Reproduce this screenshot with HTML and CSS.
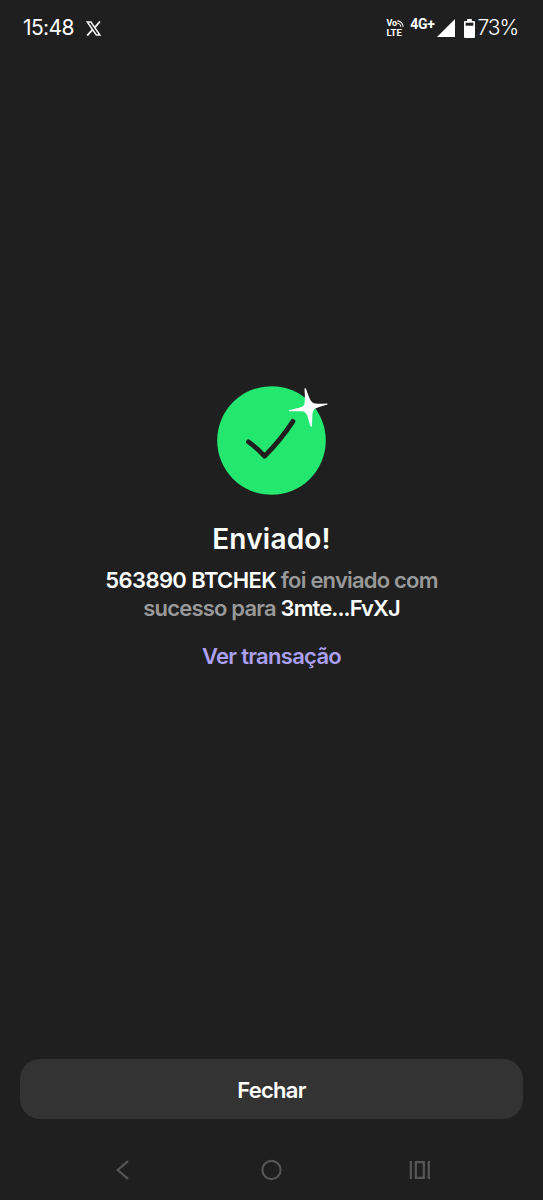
FILE: index.html
```html
<!DOCTYPE html>
<html lang="pt-BR">
<head>
    <meta charset="UTF-8">
    <meta name="viewport" content="width=device-width, initial-scale=1.0">
    <title>Enviado</title>
    <link rel="stylesheet" href="styles.css">
</head>
<body>
    <header class="status-bar">
        <div class="status-left">
            <span class="clock">15:48</span>
            <svg class="x-icon" width="16" height="15" viewBox="0 0 16 15">
                <path d="M1.3 1h3.6l9 13h-3.6z" fill="none" stroke="#f2f2f2" stroke-width="1.5"/>
                <path d="M14 .5L8.9 6.3M6.5 8.7L1.2 14.6" stroke="#f2f2f2" stroke-width="1.8"/>
            </svg>
        </div>
        <div class="status-right">
            <div class="volte">
                <div class="vo">Vo<svg width="7" height="7" viewBox="0 0 7 7">
                    <path d="M.3.9a5.8 5.8 0 0 1 5.8 5.8M.3 3.3a3.4 3.4 0 0 1 3.4 3.4" fill="none" stroke="#fff" stroke-width="1.1"/>
                </svg></div>
                <div>LTE</div>
            </div>
            <span class="network">4G+</span>
            <svg class="signal" width="18" height="18" viewBox="0 0 18 18">
                <path d="M18 0v18H0z" fill="#fff"/>
            </svg>
            <svg class="battery" width="11" height="19" viewBox="0 0 11 19">
                <path d="M3.2 0h4.6v2H10a1 1 0 0 1 1 1v15a1 1 0 0 1-1 1H1a1 1 0 0 1-1-1V3a1 1 0 0 1 1-1h2.2z" fill="#fff"/>
                <path d="M1.6 3.7h7.8v3H1.6z" fill="#1f1f1f"/>
            </svg>
            <span class="percent">73%</span>
        </div>
    </header>

    <main class="content">
        <svg class="success-icon" width="119" height="120" viewBox="0.5 0 119 120">
            <circle cx="60" cy="59.5" r="54.3" fill="#24e770"/>
            <path d="M37 60.9Q45.5 67 53 75.2Q69 59.5 81.4 40.4" fill="none" stroke="#1f1f1f" stroke-width="4.8" stroke-linecap="round" stroke-linejoin="round"/>
            <path d="M93 7.4Q93.6 6.8 94.3 7.6C96 11.5 97.8 18.5 100.7 21.2Q102.7 23.2 115.6 22.6Q116.6 23.2 115.6 23.8C110 25.3 104.4 26.6 102.2 29C100.4 31 101 38 100.5 45.3Q99.8 46.2 99.1 45.3C97.3 41 96.4 34.2 94 31.7C91.8 29.4 85 30.6 77.7 30.3Q76.9 29.7 77.8 29.1C82 27.5 89.8 27 92.2 24.4Q94.1 22.4 93 7.4z" fill="#fff"/>
        </svg>
        <h1>Enviado!</h1>
        <p class="message">
            <strong>563890 BTCHEK</strong> foi enviado com<br>
            sucesso para <strong class="address">3mte...FvXJ</strong>
        </p>
        <a class="link" href="#">Ver transação</a>
    </main>

    <footer class="footer">
        <button class="close-button">Fechar</button>
    </footer>

    <nav class="nav-bar">
        <svg width="22" height="22" viewBox="0 0 22 22">
            <path d="M16 2.2L5.7 11l10.3 8.8" fill="none" stroke="#565656" stroke-width="2.2"/>
        </svg>
        <svg width="22" height="22" viewBox="0 0 22 22">
            <circle cx="10.5" cy="11" r="9.1" fill="none" stroke="#565656" stroke-width="2.1"/>
        </svg>
        <svg width="22" height="22" viewBox="0 0 22 22">
            <path d="M1.8 2v18M19.8 2v18M6.8 3.1h8v15.8h-8z" fill="none" stroke="#565656" stroke-width="2.2"/>
        </svg>
    </nav>
</body>
</html>
```

FILE: styles.css
```css
* {
    box-sizing: border-box;
}
body {
    margin: 0;
    height: 100vh;
    display: flex;
    flex-direction: column;
    background-color: #1f1f1f;
    color: #fff;
    font-family: 'Inter', sans-serif;
    text-align: center;
}
.status-bar {
    height: 56px;
    padding: 0 25px 0 23px;
    display: flex;
    justify-content: space-between;
    align-items: center;
}
.status-left,
.status-right {
    display: flex;
    align-items: center;
}
.clock {
    padding-bottom: 1px;
    font-size: 21px;
    letter-spacing: -0.6px;
}
.x-icon {
    margin-left: 12px;
}
.volte {
    font-family: 'Roboto', sans-serif;
    font-size: 9.5px;
    font-weight: 700;
    line-height: 9px;
    text-align: left;
}
.vo {
    display: flex;
    align-items: center;
    font-size: 9px;
}
.network {
    margin: -9px 3px 0 6px;
    font-family: 'Roboto', sans-serif;
    font-size: 14px;
    font-weight: 700;
    letter-spacing: -0.3px;
}
.battery {
    margin: 0 2px 0 9px;
}
.percent {
    padding-bottom: 1px;
    font-size: 21px;
    font-weight: 300;
    letter-spacing: -1.1px;
}
.content {
    flex: 1;
    padding-top: 325px;
    display: flex;
    flex-direction: column;
    align-items: center;
}
h1 {
    margin: 20px 0 0;
    font-size: 28px;
    font-weight: 600;
    line-height: 36px;
    letter-spacing: 0.2px;
}
.message {
    margin: 10px 0 0;
    color: #999;
    font-size: 22px;
    font-weight: 600;
    line-height: 27.5px;
    letter-spacing: -0.8px;
}
.message strong {
    color: #fff;
    font-weight: 600;
    letter-spacing: -0.6px;
}
.message .address {
    letter-spacing: -0.9px;
}
.link {
    margin-top: 20px;
    color: #ab9ff2;
    font-size: 22px;
    font-weight: 600;
    line-height: 28px;
    letter-spacing: -0.7px;
    text-decoration: none;
}
.footer {
    padding: 0 20px;
}
.close-button {
    display: block;
    width: 100%;
    height: 60px;
    padding-top: 3px;
    border: none;
    border-radius: 20px;
    background-color: #333;
    color: #fff;
    font-family: 'Inter', sans-serif;
    font-size: 22px;
    font-weight: 600;
    letter-spacing: -0.75px;
    cursor: pointer;
}
.nav-bar {
    height: 81px;
    padding: 40px 112px 0;
    display: flex;
    justify-content: space-between;
}
```
